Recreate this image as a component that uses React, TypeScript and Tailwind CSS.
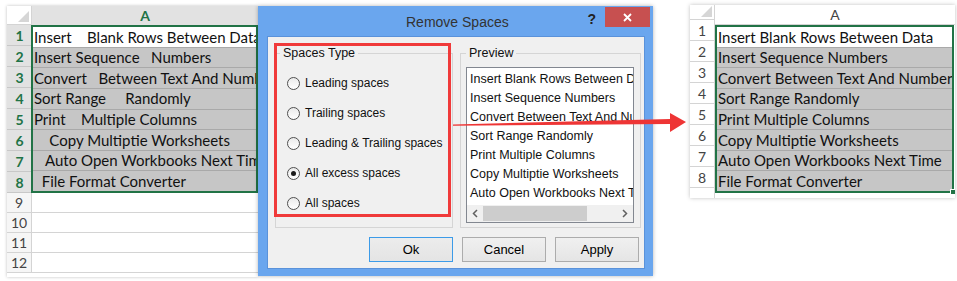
import React from "react";

const leftRows = [
  "Insert    Blank Rows Between Data",
  "Insert Sequence   Numbers",
  "Convert   Between Text And Numbers",
  "Sort Range     Randomly",
  "Print    Multiple Columns",
  "    Copy Multiptie Worksheets",
  "   Auto Open Workbooks Next Time",
  "  File Format Converter",
];

const cleanRows = [
  "Insert Blank Rows Between Data",
  "Insert Sequence Numbers",
  "Convert Between Text And Numbers",
  "Sort Range Randomly",
  "Print Multiple Columns",
  "Copy Multiptie Worksheets",
  "Auto Open Workbooks Next Time",
  "File Format Converter",
];

const options = [
  "Leading spaces",
  "Trailing spaces",
  "Leading & Trailing spaces",
  "All excess spaces",
  "All spaces",
];

function Corner() {
  return (
    <div className="relative h-full w-full">
      <svg className="absolute right-[2px] bottom-[2px]" width="11" height="11" viewBox="0 0 11 11">
        <polygon points="11,0 11,11 0,11" fill="#d6d6d6" />
      </svg>
    </div>
  );
}

function LeftSheet() {
  return (
    <div className="mt-[6px] ml-[7px] w-[251px] h-[271px] flex bg-white overflow-hidden shadow-[0_0_3px_rgba(0,0,0,0.25)] font-['Lato',sans-serif] text-[15px]">
      <div className="w-[25px] flex flex-col shrink-0">
        <div className="h-[19px] bg-white border-r border-b border-[#d4d4d4]">
          <Corner />
        </div>
        {leftRows.map((_, i) => (
          <div
            key={i}
            className="h-[21px] flex items-center justify-center bg-[#e2e2e2] border-b border-[#c8c8c8] text-[#217346] font-bold text-[14px]"
          >
            {i + 1}
          </div>
        ))}
        {[9, 10, 11, 12].map((n) => (
          <div
            key={n}
            className="h-[20px] flex items-center justify-center bg-[#f6f6f6] border-r border-b border-[#d4d4d4] text-[#444] text-[14px]"
          >
            {n}
          </div>
        ))}
      </div>
      <div className="flex-1 min-w-0 flex flex-col">
        <div className="h-[19px] flex items-center justify-center bg-[#e2e2e2] text-[#217346] font-bold text-[14px]">
          A
        </div>
        <div className="h-[168px] border-2 border-[#217346] flex flex-col -ml-[1px]">
          {leftRows.map((t, i) => (
            <div
              key={i}
              className={`flex-1 flex items-center pl-[1px] whitespace-pre overflow-hidden text-[#111] ${
                i === 0 ? "bg-white" : "bg-[#c6c6c6]"
              } ${i < 7 ? "border-b border-[#a9a9a9]" : ""}`}
            >
              {t}
            </div>
          ))}
        </div>
        {[0, 1, 2, 3, 4].map((n) => (
          <div key={n} className="h-[20px] shrink-0 border-b border-[#d4d4d4]" />
        ))}
      </div>
    </div>
  );
}

function Radio({ checked }: { checked?: boolean }) {
  return (
    <span className="w-[13px] h-[13px] rounded-full border border-[#4f4f4f] bg-gradient-to-b from-[#eaeaea] to-white flex items-center justify-center shrink-0">
      {checked && <span className="w-[5px] h-[5px] rounded-full bg-[#1a1a1a]" />}
    </span>
  );
}

function Button({ label, primary }: { label: string; primary?: boolean }) {
  return (
    <div
      className={`w-[84px] h-[25px] flex items-center justify-center text-[13px] text-black border bg-gradient-to-b ${
        primary
          ? "border-[#3c9be8] from-[#ececec] to-[#e4e4e4]"
          : "border-[#acacac] from-[#f0f0f0] to-[#e5e5e5]"
      }`}
    >
      {label}
    </div>
  );
}

function Dialog() {
  return (
    <div className="mt-[6px] w-[395px] h-[270px] bg-[#6aa6ee] flex flex-col pl-[9px] pr-[8px] pb-[7px] shadow-[0_0_4px_rgba(0,0,0,0.3)] font-['Liberation_Sans',Arial,sans-serif] shrink-0">
      <div className="h-[30px] flex items-start">
        <span className="ml-[139px] mt-[6px] text-[14px] text-[#333]">Remove Spaces</span>
        <span className="ml-auto mt-[3px] text-[14px] font-bold text-[#222]">?</span>
        <div className="ml-[9px] mt-[1px] -mr-[5px] w-[45px] h-[20px] bg-[#c75050] flex items-center justify-center">
          <svg width="9" height="9" viewBox="0 0 9 9">
            <path d="M1 1 L8 8 M8 1 L1 8" stroke="white" strokeWidth="1.8" />
          </svg>
        </div>
      </div>
      <div className="relative flex-1 bg-[#f0f0f0] border border-[#5a92da] flex flex-col">
        <div className="flex gap-[7px] pl-[7px] pt-[9px]">
          <fieldset className="w-[178px] h-[182px] border border-[#d5d5d5] pl-[11px]">
            <legend className="ml-[-7px] px-[3px] text-[12.5px] text-[#111] leading-[15px]">Spaces Type</legend>
            <div className="flex flex-col pt-[7px]">
              {options.map((o, i) => (
                <div key={o} className="h-[30px] flex items-center gap-[5px] text-[12px] text-[#111] whitespace-nowrap">
                  <Radio checked={i === 3} />
                  <span>{o}</span>
                </div>
              ))}
            </div>
          </fieldset>
          <fieldset className="w-[181px] h-[182px] border border-[#d5d5d5] pl-[5px]">
            <legend className="px-[3px] text-[12.5px] text-[#111] leading-[15px]">Preview</legend>
            <div className="mt-[6px] w-[168px] h-[156px] border border-[#828790] bg-white flex flex-col">
              <div className="h-[137px] overflow-hidden pt-[2px] pl-[3px]">
                {cleanRows.slice(0, 7).map((t) => (
                  <div key={t} className="h-[19px] leading-[19px] whitespace-nowrap text-[12.5px] text-[#111]">
                    {t}
                  </div>
                ))}
              </div>
              <div className="h-[17px] flex items-center bg-[#f0f0f0]">
                <div className="w-[16px] flex justify-center">
                  <svg width="6" height="9" viewBox="0 0 6 9">
                    <path d="M5 1 L1.5 4.5 L5 8" stroke="#606060" strokeWidth="1.5" fill="none" />
                  </svg>
                </div>
                <div className="w-[104px] h-[15px] bg-[#cdcdcd]" />
                <div className="flex-1" />
                <div className="w-[16px] flex justify-center">
                  <svg width="6" height="9" viewBox="0 0 6 9">
                    <path d="M1 1 L4.5 4.5 L1 8" stroke="#606060" strokeWidth="1.5" fill="none" />
                  </svg>
                </div>
              </div>
            </div>
          </fieldset>
        </div>
        <div className="flex justify-end gap-[9px] mt-[9px] pr-[5px]">
          <Button label="Ok" primary />
          <Button label="Cancel" />
          <Button label="Apply" />
        </div>
        <div className="absolute left-[6px] top-[6px] w-[177px] h-[174px] border-[3px] border-[#f03a3a]" />
      </div>
    </div>
  );
}

function RightSheet() {
  return (
    <div className="mt-[5px] ml-[37px] w-[265px] h-[193px] flex bg-white overflow-hidden shadow-[0_0_4px_rgba(0,0,0,0.25)] font-['Lato',sans-serif] text-[15px]">
      <div className="w-[25px] flex flex-col shrink-0">
        <div className="h-[20px] border-r border-b border-[#d4d4d4]">
          <Corner />
        </div>
        {cleanRows.map((_, i) => (
          <div
            key={i}
            className="h-[21px] shrink-0 flex items-center justify-center border-r border-b border-[#d4d4d4] text-[#444] text-[14px]"
          >
            {i + 1}
          </div>
        ))}
        <div className="h-[10px] shrink-0 border-r border-[#d4d4d4]" />
      </div>
      <div className="flex-1 min-w-0 flex flex-col">
        <div className="h-[20px] flex items-center justify-center border-b border-[#d4d4d4] text-[#444] text-[14px]">
          A
        </div>
        <div className="relative h-[168px] border-2 border-[#217346] flex flex-col mr-[1px]">
          {cleanRows.map((t, i) => (
            <div
              key={i}
              className={`flex-1 flex items-center pl-[1px] whitespace-pre overflow-hidden text-[#111] ${
                i === 0 ? "bg-white" : "bg-[#c6c6c6]"
              } ${i < 7 ? "border-b border-[#a9a9a9]" : ""}`}
            >
              {t}
            </div>
          ))}
          <div className="absolute -right-[4px] -bottom-[4px] w-[6px] h-[6px] bg-[#217346] border border-white" />
        </div>
      </div>
    </div>
  );
}

export default function App() {
  return (
    <div className="relative w-[957px] h-[281px] bg-white overflow-hidden flex items-start">
      <LeftSheet />
      <Dialog />
      <RightSheet />
      <svg className="absolute left-[450px] top-[110px] z-20" width="240" height="25" viewBox="0 0 240 25">
        <polygon points="3,14.5 220,9 220,3 236,12 220,22 220,14 3,15.8" fill="#ee3535" />
      </svg>
    </div>
  );
}
